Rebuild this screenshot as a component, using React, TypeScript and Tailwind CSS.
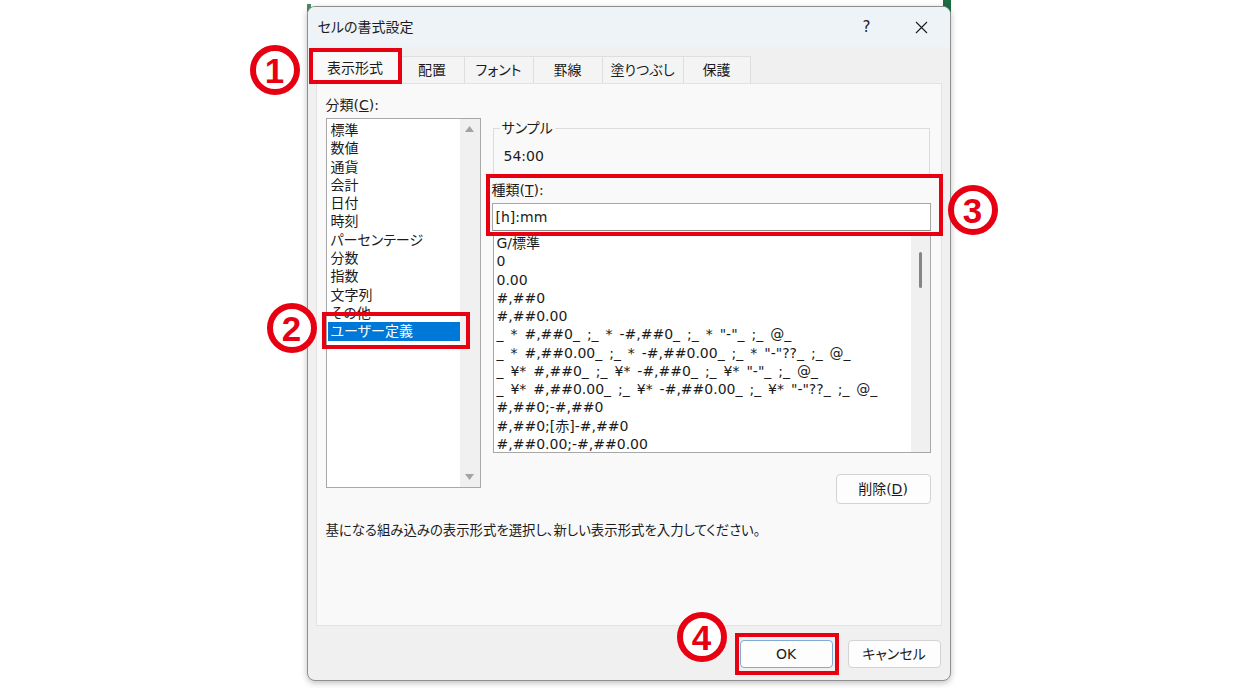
import React from 'react';

// セルの書式設定 dialog with numbered annotations

const FONT = "font-['DejaVu_Sans','Noto_Sans_CJK_JP',sans-serif] [font-feature-settings:'palt']";

const CATEGORIES = [
  '標準',
  '数値',
  '通貨',
  '会計',
  '日付',
  '時刻',
  'パーセンテージ',
  '分数',
  '指数',
  '文字列',
  'その他',
  'ユーザー定義',
];

const FORMATS = [
  'G/標準',
  '0',
  '0.00',
  '#,##0',
  '#,##0.00',
  '_ * #,##0_ ;_ * -#,##0_ ;_ * "-"_ ;_ @_',
  '_ * #,##0.00_ ;_ * -#,##0.00_ ;_ * "-"??_ ;_ @_',
  '_ ¥* #,##0_ ;_ ¥* -#,##0_ ;_ ¥* "-"_ ;_ @_',
  '_ ¥* #,##0.00_ ;_ ¥* -#,##0.00_ ;_ ¥* "-"??_ ;_ @_',
  '#,##0;-#,##0',
  '#,##0;[赤]-#,##0',
  '#,##0.00;-#,##0.00',
];

const TABS = [
  { label: '配置', w: 'w-[64px]' },
  { label: 'フォント', w: 'w-[69px]' },
  { label: '罫線', w: 'w-[69px]' },
  { label: '塗りつぶし', w: 'w-[81px]' },
  { label: '保護', w: 'w-[67px]' },
];

function Marker({ n, className }: { n: string; className: string }) {
  return (
    <div
      className={`absolute z-20 w-[50px] h-[50px] rounded-full border-[6px] border-[#e60012] bg-white flex items-center justify-center text-[#e60012] font-bold text-[35px] leading-none font-['Liberation_Sans',sans-serif] ${className}`}
    >
      {n}
    </div>
  );
}

function Button({ children, primary }: { children: React.ReactNode; primary?: boolean }) {
  return (
    <button
      className={`w-[93px] h-[28px] rounded-[4px] border bg-[#fdfdfd] text-[14px] text-[#1b1b1b] flex items-center justify-center ${
        primary ? 'border-[#7fa9d6]' : 'border-[#d3d3d3]'
      }`}
    >
      {children}
    </button>
  );
}

export default function App() {
  return (
    <div className={`w-full min-h-screen bg-white flex justify-center pt-[6px] ${FONT}`}>
      <div className="relative w-[644px] h-[675px]">
        {/* excel window peeking behind the rounded corners */}
        <div className="absolute -top-[6px] right-0 w-[8px] h-[16px] bg-[#1f6b43]" />
        <div className="absolute -top-[2px] left-0 w-[4px] h-[8px] bg-[#4d8a66]" />

        <div className="relative z-10 w-full h-full flex flex-col rounded-[8px] border border-[#8f8f8f] bg-[#f0f0f0] overflow-hidden shadow-[0_2px_6px_rgba(0,0,0,0.25)]">
          {/* title bar */}
          <div className="h-[40px] shrink-0 flex items-center bg-[#eef3f8] pl-[10px] pr-[5px]">
            <span className="text-[14px] text-[#1b1b1b]">セルの書式設定</span>
            <div className="ml-auto mr-[9px] w-[46px] flex justify-center text-[15px] text-[#1b1b1b]">?</div>
            <div className="w-[46px] flex justify-center">
              <svg width="13" height="13" viewBox="0 0 13 13" stroke="#1b1b1b" strokeWidth="1.1">
                <path d="M1 1L12 12M12 1L1 12" />
              </svg>
            </div>
          </div>

          {/* tabs */}
          <div className="flex items-end pt-[4px] pl-[2px] text-[14px] text-[#1b1b1b]">
            <div className="w-[91px] h-[33px] flex items-center justify-center bg-[#f9f9f9] border border-b-0 border-[#dedede] relative z-10">
              表示形式
            </div>
            {TABS.map((t) => (
              <div
                key={t.label}
                className={`${t.w} h-[28px] flex items-center justify-center bg-[#f4f4f4] border-t border-r border-[#dedede]`}
              >
                {t.label}
              </div>
            ))}
          </div>

          {/* panel */}
          <div className="mx-[8px] h-[543px] -mt-px bg-[#f9f9f9] border border-[#e2e2e2] pl-[9px] pt-[12px] text-[14px] text-[#1b1b1b]">
            <div className="flex gap-[11px]">
              {/* category column */}
              <div className="w-[155px]">
                <div className="h-[18px] leading-[18px]">
                  分類(<span className="underline">C</span>):
                </div>
                <div className="mt-[4px] h-[370px] bg-white border border-[#a8a8a8] flex">
                  <div className="flex-1 pt-[2px] pl-px">
                    {CATEGORIES.map((c, i) => (
                      <div
                        key={c}
                        className={`h-[18.3px] leading-[18.3px] pl-[3px] whitespace-nowrap ${
                          i === CATEGORIES.length - 1 ? 'bg-[#0078d7] text-white' : ''
                        }`}
                      >
                        {c}
                      </div>
                    ))}
                  </div>
                  <div className="w-[20px] bg-[#f0f0f0] flex flex-col items-center justify-between py-[7px]">
                    <svg width="9" height="6" viewBox="0 0 9 6">
                      <path d="M4.5 0L9 6H0Z" fill="#a3a3a3" />
                    </svg>
                    <svg width="9" height="6" viewBox="0 0 9 6">
                      <path d="M0 0H9L4.5 6Z" fill="#a3a3a3" />
                    </svg>
                  </div>
                </div>
              </div>

              {/* format column */}
              <div className="w-[439px]">
                <fieldset className="mt-[23px] ml-px w-[437px] h-[56px] border border-[#dcdcdc] px-[10px] pb-0">
                  <legend className="ml-[-4px] px-[2px] h-[18px] leading-[18px]">サンプル</legend>
                  <div className="pt-[10px] h-[18px] leading-[18px] whitespace-nowrap">54:00</div>
                </fieldset>
                <div className="mt-[6px] h-[18px] leading-[18px]">
                  種類(<span className="underline">T</span>):
                </div>
                <div className="mt-[4px] h-[28px] bg-white border border-[#a6a6a6] border-b-[#8a8a8a] flex items-center pl-[3px]">
                  [h]:mm
                </div>
                <div className="mt-[2px] ml-px h-[220px] bg-white border border-[#a8a8a8] flex overflow-hidden">
                  <div className="flex-1 pl-[3px] [word-spacing:2.5px]">
                    {FORMATS.map((f) => (
                      <div key={f} className="h-[18.25px] leading-[18.25px] whitespace-pre">
                        {f}
                      </div>
                    ))}
                  </div>
                  <div className="w-[19px] bg-[#f0f0f0] pt-[18px] flex justify-center">
                    <div className="w-[3px] h-[36px] rounded-full bg-[#858585]" />
                  </div>
                </div>
                <div className="mt-[21px] flex justify-end">
                  <button className="w-[95px] h-[30px] rounded-[4px] border border-[#d3d3d3] bg-[#fdfdfd] text-[14px] text-[#1b1b1b]">
                    削除(<span className="underline">D</span>)
                  </button>
                </div>
              </div>
            </div>

            <div className="mt-[18px] text-[13.4px] leading-[18px] whitespace-nowrap">
              基になる組み込みの表示形式を選択し、新しい表示形式を入力してください。
            </div>
          </div>

          {/* footer */}
          <div className="flex justify-end gap-[15px] pr-[9px] pt-[14px]">
            <Button primary>OK</Button>
            <Button>キャンセル</Button>
          </div>
        </div>

        {/* annotations */}
        <div className="absolute z-20 left-[2px] top-[42px] w-[93px] h-[36px] border-[4px] border-[#e60012]" />
        <div className="absolute z-20 left-[15px] top-[306px] w-[148px] h-[37px] border-[4px] border-[#e60012]" />
        <div className="absolute z-20 left-[179px] top-[168px] w-[457px] h-[62px] border-[4px] border-[#e60012]" />
        <div className="absolute z-20 left-[428px] top-[627px] w-[104px] h-[42px] border-[4px] border-[#e60012]" />

        <Marker n="1" className="-left-[57px] top-[39px]" />
        <Marker n="2" className="-left-[40px] top-[297px]" />
        <Marker n="3" className="left-[641px] top-[179px]" />
        <Marker n="4" className="left-[370px] top-[606px]" />
      </div>
    </div>
  );
}
